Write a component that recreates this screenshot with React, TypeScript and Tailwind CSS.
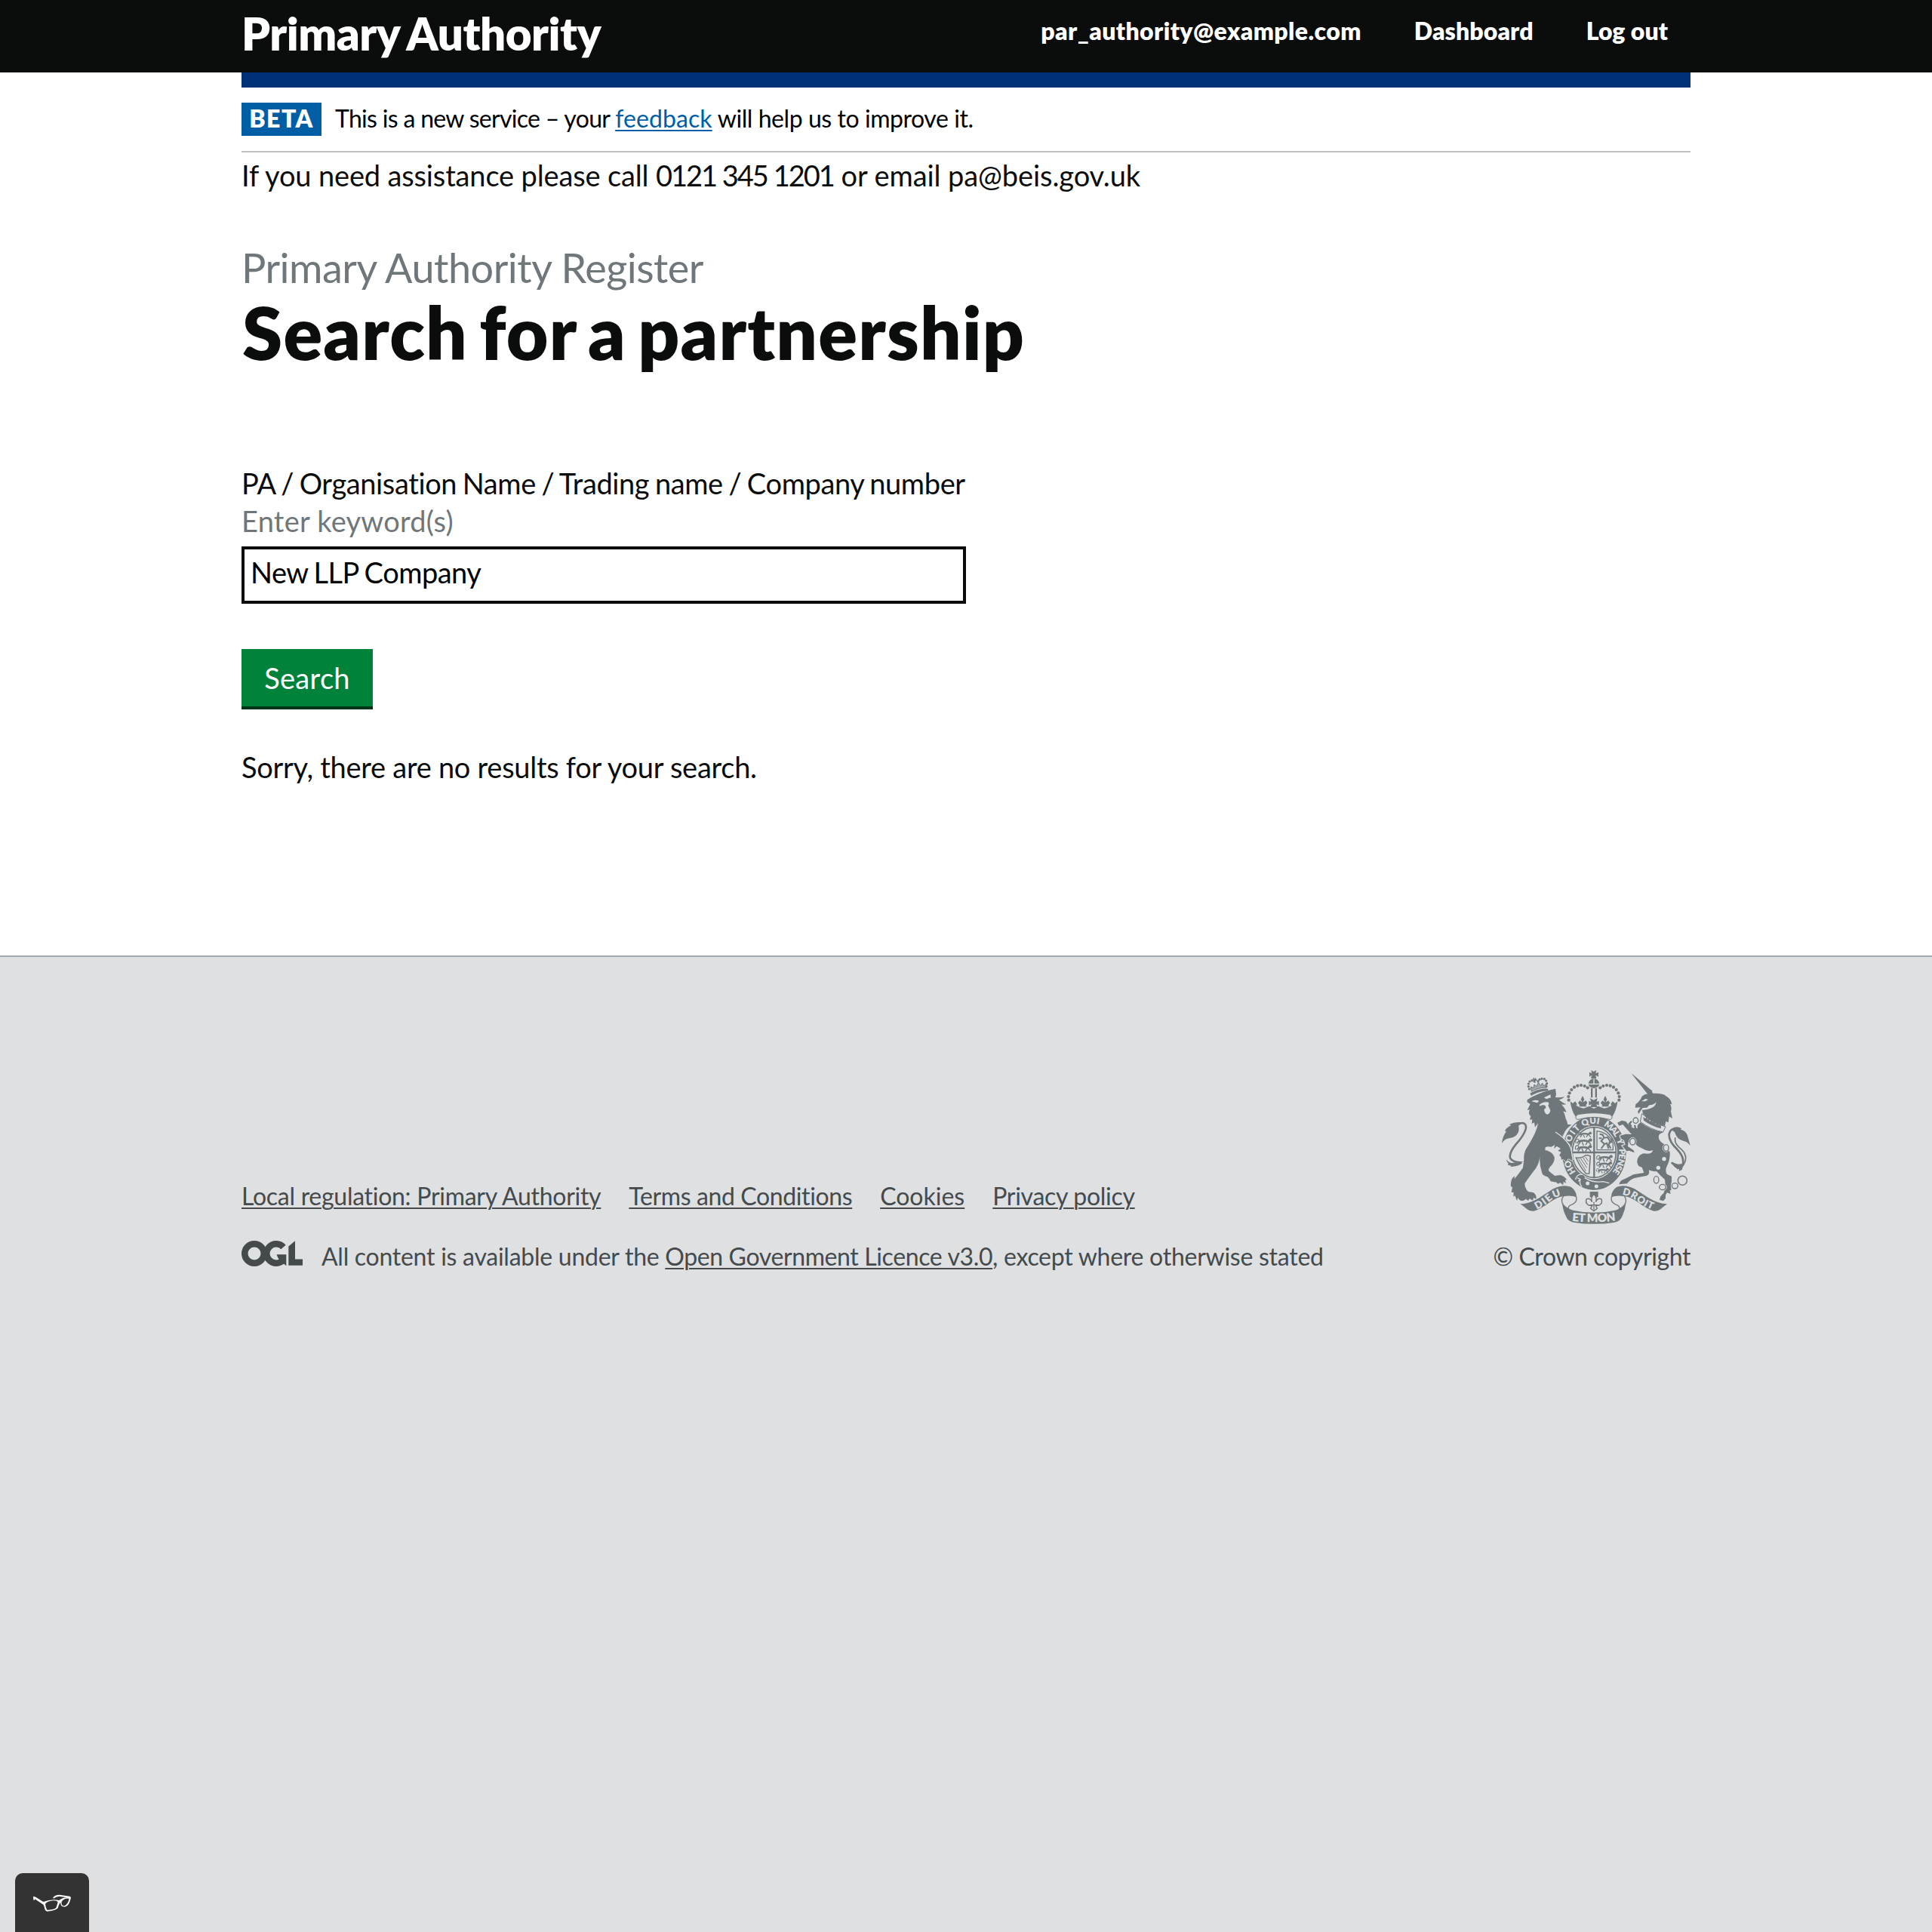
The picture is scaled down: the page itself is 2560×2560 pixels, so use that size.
import type { ReactNode } from "react";

const DARK = "#6f777b";
const PAPER = "#dee0e2";

/* Beads on the two arches of the central crown. */
const CROWN_BEADS: [number, number][] = [
  [356, 173], [355, 159], [359, 145], [367, 132], [378, 122], [391, 116], [405, 114], [419, 117], [431, 124],
  [556, 173], [557, 159], [553, 145], [545, 132], [534, 122], [521, 116], [507, 114], [493, 117], [481, 124],
];

/* Beads on the crown worn by the lion. */
const LION_CROWN_BEADS: [number, number][] = [
  [199, 129], [196, 119], [196, 108], [201, 99], [210, 95], [219, 98],
  [267, 118], [269, 107], [266, 96], [259, 89], [249, 88], [240, 91], [234, 98],
];

/* Links of the unicorn's chain: x, y, rx, ry. */
const CHAIN: [number, number, number, number][] = [
  [622, 254, 11, 12], [610, 338, 12, 14], [743, 363, 11, 14], [704, 490, 11, 15], [729, 519, 14, 12], [778, 514, 13, 12],
];

/* Words on the garter: text, offset along the ring, length. */
const GARTER_WORDS: [string, number, number][] = [
  ["HO", 84, 54], ["SOIT", 183, 93], ["QUI", 288, 66], ["MAL", 372, 68], ["Y", 450, 22], ["PENSE", 488, 98],
];

function LionGuardant({ x, y, s = 1 }: { x: number; y: number; s?: number }) {
  return (
    <g transform={`translate(${x} ${y}) scale(${s})`} fill="none" stroke={DARK} strokeWidth="4.5" strokeLinecap="round">
      <path d="M2 13q-4-9 4-11q7 1 3 7q-6 3-1 5" strokeWidth="2.5" />
      <path d="M11 9q12-5 26 0l6-6" strokeWidth="6" />
      <path d="M14 11l-5 7M20 12l3 7M34 11l-4 7M38 10l6 8" strokeWidth="3" />
      <circle cx="44" cy="5" r="4" fill={DARK} stroke="none" />
    </g>
  );
}

function RoyalArms() {
  return (
    <svg viewBox="90 54 750 612" className="h-[204px] w-[250px]" fill={DARK} aria-label="Royal coat of arms">
      {/* Lion supporter */}
      <path d="M190 180L192 171Q244 139 303 128L306 150L303 162Q320 164 340 160Q329 170 317 172Q330 183 346 190Q334 192 327 190Q342 206 347 222L334 217Q342 232 344 247Q350 258 352 270L368 271Q349 284 341 298L331 318Q345 330 354 348L340 372L309 356L297 366L301 351L286 359Q272 355 263 361L262 372Q290 377 298 397Q303 412 290 430Q274 445 276 454Q288 466 301 474L322 471Q341 476 348 490L342 491L345 504L335 497L334 511L321 501Q313 511 308 500L284 496Q281 486 271 478Q250 473 249 460Q239 430 241 397Q238 430 220 451Q196 482 181 505Q181 524 195 537L216 541Q230 552 226 566L216 561L213 572L201 565L194 573L186 566L175 573Q160 575 154 560L150 573L142 552L136 557L137 539L128 540L132 520L126 516Q124 493 134 481L141 475L140 487Q158 466 174 442L178 409Q176 386 187 366Q204 341 222 304Q232 282 234 264L222 281L219 262L209 267L211 250L201 251L205 237Q193 230 201 211L191 213Q198 200 203 189Z" />
      <path d="M208 178Q222 170 238 176L231 184ZM258 163L283 151L285 163L267 169Z" fill={PAPER} />
      <path d="M240 191Q254 178 273 181Q281 187 274 194L283 214Q281 228 271 230Q260 228 258 210L266 203L262 194Q253 190 240 197Z" fill={PAPER} />
      <path d="M202 146Q236 126 273 128L275 136Q235 138 207 156Z" />
      <path d="M208 139Q234 123 269 123L267 107L257 117L251 105L245 116L235 102L229 119L219 111L216 125L205 120Z" fill={DARK} fillOpacity="0.55" stroke={DARK} strokeWidth="3" />
      <path d="M216 82L221 90L223 84L228 90L230 95L222 97L224 104H218L219 96L213 93Z" />
      {LION_CROWN_BEADS.map(([x, y], i) => (
        <circle key={i} cx={x} cy={y} r="4.8" />
      ))}
      {/* Lion tail */}
      <path d="M115 427Q140 437 163 421Q133 419 124 405Q116 386 145 350Q178 314 185 288Q189 267 173 264Q158 264 148 275" fill="none" stroke={DARK} strokeWidth="8" />
      <path d="M172 262Q142 258 120 270L127 274Q104 284 102 298L109 296Q93 315 90 345Q101 326 122 324Q145 321 154 304Q161 288 156 276Z" />
      <path d="M107 408Q115 420 128 423L156 419L171 423Q160 437 124 438L130 431Q111 427 107 408Z" />

      {/* Garter */}
      <ellipse cx="457" cy="383" rx="132" ry="151" fill={PAPER} />
      <ellipse cx="457" cy="383" rx="127" ry="147" />
      <ellipse cx="457" cy="381" rx="92" ry="106" fill={PAPER} />
      <ellipse cx="457" cy="381" rx="87" ry="100" fill="none" stroke={DARK} strokeWidth="5" />
      <path d="M368 381H546M457 280V482" stroke={DARK} strokeWidth="7" />
      <path id="garter" d="M457 495A99 114 0 0 1 457 267A99 114 0 0 1 457 495" fill="none" />
      {GARTER_WORDS.map(([word, offset, length]) => (
        <text key={word} fill={PAPER} fontFamily="Lato" fontSize="35" fontWeight="800">
          <textPath href="#garter" startOffset={offset} textLength={length} lengthAdjust="spacing">
            {word}
          </textPath>
        </text>
      ))}
      {/* Quarters */}
      <LionGuardant x={392} y={299} s={1.15} />
      <LionGuardant x={382} y={325} s={1.4} />
      <LionGuardant x={381} y={351} s={1.4} />
      <path d="M468 371V296Q515 302 532 345V371Z" fill="none" stroke={DARK} strokeWidth="4" />
      <path d="M479 308l12 3l5 12l14-2l10 15l-5 14l8 15M494 325l-9 11l13 12l12-5M498 348l-13 18M507 343l7 23M476 325l11 0M521 344q12-13 2-17" fill="none" stroke={DARK} strokeWidth="6" />
      <path d="M385 402Q408 405 422 393Q431 391 442 396L437 465L425 466Q402 441 385 402Z" fill="none" stroke={DARK} strokeWidth="4.5" />
      <path d="M395 407L424 455M404 406L428 442M413 402L431 430M422 399L434 416" stroke={DARK} strokeWidth="3" />
      <LionGuardant x={466} y={391} s={1.35} />
      <LionGuardant x={466} y={417} s={1.3} />
      <LionGuardant x={465} y={443} s={1.05} />
      {/* Buckle and strap end */}
      <path d="M383 484Q393 464 412 471L424 482Q452 498 484 498L512 510Q470 538 425 524L391 508Z" />
      <path d="M419 482Q452 503 492 497L517 503" fill="none" stroke={PAPER} strokeWidth="4" />
      <path d="M383 489Q389 465 411 469M390 482L402 488L394 496M402 488Q396 503 408 517" fill="none" stroke={PAPER} strokeWidth="4" />
      <g fill={PAPER}>
        <circle cx="431" cy="504" r="7.5" />
        <circle cx="466" cy="516" r="7.5" />
      </g>
      {/* Lion foreleg over the garter */}
      <path d="M303 300Q338 322 356 350Q364 364 366 380L372 414L354 405L346 418L336 405L326 410Q328 397 318 393L326 380L313 374L324 366L309 356Z" />
      <path d="M303 300Q338 322 357 350Q366 364 368 382L373 412" fill="none" stroke={PAPER} strokeWidth="4" />
      <path d="M372 416L354 407L346 420L334 409" fill="none" stroke={PAPER} strokeWidth="3" />

      {/* Unicorn supporter */}
      <path d="M606 68L612 72L688 137L670 150Z" />
      <path d="M620 203L622 190Q640 176 647 158Q657 149 672 148L684 131L690 146Q735 145 742 157Q762 167 766 190L759 188Q767 204 762 218L768 246L755 238L752 262L742 258L738 276Q690 271 651 228L648 212Q661 213 676 208Q702 201 704 181Q694 193 676 193L667 203L650 204L641 217L634 228L630 219L641 202Z" />
      <path d="M645 178L661 168L672 171L660 178Z" fill={PAPER} />
      <path d="M641 262Q682 293 731 301L717 308Q707 324 723 340Q748 356 758 381Q760 410 745 438Q738 455 747 468L765 476L765 496Q760 514 764 530L758 532L761 546L747 541Q739 549 741 563L732 574L717 570Q719 553 733 544Q743 521 738 489Q720 473 705 456Q687 458 674 451Q680 468 664 474L621 482Q600 487 588 505L556 508Q560 492 578 487L613 469L655 462L647 440Q631 439 628 420Q626 395 653 385Q690 390 690 372Q670 380 650 366Q622 356 615 337L593 340L591 357L614 373L617 382L596 374L586 376L569 355L581 350L576 333Q559 326 561 314L583 308L606 309L590 292L571 270L556 275L549 263L567 254L583 258L590 267L612 284L630 285Q625 273 641 262Z" stroke={PAPER} strokeWidth="7" paintOrder="stroke" />
      <path d="M605 278L597 267L606 257M622 288L618 272" fill="none" stroke={DARK} strokeWidth="7" />
      <path d="M647 227Q690 266 741 279L731 300Q683 291 640 259Z" fill={PAPER} stroke={DARK} strokeWidth="3" />
      <path d="M654 254L652 240L660 246L665 240L669 250L676 248L678 258L685 253L690 262L698 259L701 269L709 263L713 272L722 270L723 286Q686 277 654 254Z" />
      <g fill={PAPER}>
        <circle cx="735" cy="407" r="8" />
        <circle cx="712" cy="442" r="8" />
      </g>
      {CHAIN.map(([x, y, rx, ry], i) => (
        <g key={i} fill="none">
          <ellipse cx={x} cy={y} rx={rx + 2} ry={ry + 2} stroke={PAPER} strokeWidth="3" />
          <ellipse cx={x} cy={y} rx={rx - 1} ry={ry - 1} fill={PAPER} stroke={DARK} strokeWidth="4" />
        </g>
      ))}
      <circle cx="808" cy="493" r="18" fill="none" stroke={DARK} strokeWidth="4.5" />
      {/* Unicorn tail */}
      <path d="M765 422Q784 437 808 433Q819 403 788 370Q752 336 755 308Q760 285 780 289" fill="none" stroke={DARK} strokeWidth="8" />
      <path d="M780 322Q774 342 795 361Q831 389 817 421Q808 444 786 446" fill="none" stroke={DARK} strokeWidth="5" />
      <path d="M762 290Q780 273 804 285L801 290Q825 296 829 318L839 353Q826 337 811 335Q785 329 777 300Z" />
      <path d="M762 419L790 428L813 425L806 450L793 456L796 447Q777 446 762 419Z" />

      {/* Central crown */}
      <path d="M445 54L455 60L466 54L463 67L474 62V80L463 74L466 87H444L448 74L438 80V62L448 67Z" />
      <path d="M434 107Q438 91 454 87V107ZM458 87Q474 91 478 107H458ZM434 111H478Q473 125 456 126Q439 125 434 111Z" />
      <path d="M444 126H451V163H444ZM461 126H468V163H461Z" />
      {CROWN_BEADS.map(([x, y], i) => (
        <circle key={i} cx={x} cy={y} r="6.3" />
      ))}
      <path d="M362 180L372 194L388 196L399 202L415 206L438 197L456 207L474 197L497 206L513 202L524 196L540 194L550 180Q545 214 530 238Q500 225 456 225Q412 225 382 238Q367 214 362 180Z" />
      <path d="M440 165L455 173L470 165L467 180L476 176V194L466 189L470 201H442L446 189L436 194V176L445 180Z" />
      <path d="M411 156L418 170L412 182L424 175L430 184L424 194L428 199H396L400 194L393 184L400 175L410 182L404 170ZM501 156L508 170L502 182L513 175L520 184L513 194L518 199H486L490 194L483 184L490 175L500 182L494 170Z" />
      <path d="M362 178L372 186L382 178L389 189L382 202H369ZM550 178L540 186L530 178L523 189L530 202H543Z" />
      <path d="M384 243Q383 231 400 229Q456 219 512 229Q529 231 528 243Q527 253 513 249Q456 233 399 249Q385 253 384 243Z" fill={PAPER} stroke={DARK} strokeWidth="3" />

      {/* Fleur-de-lis pendant */}
      <path d="M440 537H473V559H440Z" />
      <path d="M456 546Q471 563 463 578Q472 560 485 566Q494 583 475 592H463L469 604L456 614L443 604L449 592H437Q419 583 427 566Q440 560 449 578Q441 563 456 546Z" fill={PAPER} stroke={DARK} strokeWidth="4.5" />
      <path d="M440 590H472M456 578V608" stroke={DARK} strokeWidth="4" />

      {/* Motto ribbon */}
      <path d="M164 586Q200 585 240 561L294 526Q334 506 365 518Q386 532 387 557L384 562Q364 551 337 555Q313 557 281 579Q243 607 218 614Q197 615 186 603Z" />
      <path d="M747 586Q712 585 672 561L618 526Q578 506 547 518Q526 532 525 557L528 562Q548 551 575 555Q600 557 631 579Q668 607 694 614Q714 615 725 603Z" />
      <path d="M337 553Q324 566 331 584Q338 598 355 607Q352 592 372 587Q391 577 386 558Q372 549 337 553ZM575 553Q588 566 581 584Q574 598 557 607Q560 592 540 587Q521 577 526 558Q540 549 575 553Z" fill={PAPER} stroke={DARK} strokeWidth="4" />
      <path d="M330 581Q337 598 373 611Q456 630 541 611Q573 600 583 581Q581 607 569 634Q562 654 539 659Q456 672 375 659Q351 654 346 637Q332 610 330 581Z" />
      <path id="motto-left" d="M229 608Q262 592 288 569Q310 554 336 551" fill="none" />
      <path id="motto-mid" d="M369 654Q456 663 546 652" fill="none" />
      <path id="motto-right" d="M568 549Q597 553 621 570Q655 597 692 610" fill="none" />
      <g fill={PAPER} fontFamily="Lato" fontWeight="800">
        <text fontSize="40">
          <textPath href="#motto-left" textLength="112" lengthAdjust="spacing">DIEU</textPath>
        </text>
        <text fontSize="46">
          <textPath href="#motto-mid" textLength="174" lengthAdjust="spacing">ET MON</textPath>
        </text>
        <text fontSize="39">
          <textPath href="#motto-right" textLength="134" lengthAdjust="spacing">DROIT</textPath>
        </text>
      </g>
    </svg>
  );
}

function OglLogo() {
  return (
    <svg viewBox="0 0 81 34" className="h-[34px] w-[81px]" fill="none" stroke="#454a4c" aria-label="OGL">
      <circle cx="17" cy="17" r="12.75" strokeWidth="8.5" />
      <path d="M55.5 8.5A12.75 12.75 0 1 0 55.5 25.5" strokeWidth="8.5" />
      <path d="M46.5 18.3H59.3V33.3L53 28L49 24Z" fill="#454a4c" stroke="none" />
      <path d="M62.3 7.5L71 0.3V24.5H81V32.8H62.3Z" fill="#454a4c" stroke="none" />
    </svg>
  );
}

function Glasses() {
  return (
    <svg viewBox="132 148 150 69" className="h-[23px] w-[50px]" fill="#fff" aria-label="Glasses">
      <path d="M133 156L142 159L172 178Q205 166 235 172Q248 162 266 161L235 156Q221 157 214 165L210 162Q218 150 236 150L277 156Q284 158 281 165L278 176Q272 196 258 198Q245 198 242 190L240 180Q233 189 230 203Q222 213 188 216Q181 215 178 207Q176 196 173 190L141 168Q137 167 137 171L134 172Q131 164 133 156ZM180 186Q181 200 187 210Q210 211 223 202L230 180Q226 173 214 173Q190 174 180 186ZM245 178Q243 192 251 194Q263 196 272 176L275 166Q268 163 259 166Q248 170 245 178Z" fillRule="evenodd" />
    </svg>
  );
}

function FooterLink({ children, className = "" }: { children: ReactNode; className?: string }) {
  return (
    <a href="#" className={`underline decoration-2 underline-offset-[3px] ${className}`}>
      {children}
    </a>
  );
}

export default function App() {
  return (
    <div className="flex h-[2560px] w-[2560px] flex-col overflow-hidden bg-white font-[Lato,sans-serif] text-[#0b0c0c]">
      <header className="h-24 bg-[#0b0c0c] text-white">
        <div className="mx-auto flex h-full w-[1920px] justify-between">
          <a href="#" className="pt-[14px] text-[60px] leading-[60px] font-extrabold tracking-[-0.5px] [word-spacing:-2px]">
            Primary Authority
          </a>
          <nav className="flex gap-[70px] pt-[21px] pr-[30px] text-[32px] leading-10 font-extrabold">
            <a href="#" className="tracking-[0.4px]">par_authority@example.com</a>
            <a href="#" className="tracking-[0.1px]">Dashboard</a>
            <a href="#">Log out</a>
          </nav>
        </div>
      </header>

      <main className="mx-auto h-[1170px] w-[1920px] shrink-0">
        <div className="h-5 bg-[#003078]" />
        <div className="flex items-center border-b-2 border-[#bfc1c3] py-5 text-[32px] leading-[41px] text-black">
          <strong className="mr-[18px] w-[106px] bg-[#005ea5] pb-[3px] text-center font-extrabold tracking-[1.5px] text-white">BETA</strong>
          <p className="pb-[3px] tracking-[-0.69px]">
            This is a new service – your{" "}
            <a href="#" className="tracking-[0.1px] text-[#005ea5] underline decoration-2 underline-offset-[3px]">feedback</a>
            <span className="tracking-[-0.44px]"> will help us to improve it.</span>
          </p>
        </div>
        <p className="pt-[5px] text-[38px] leading-[50px] tracking-[-0.15px]">
          If you need assistance please call <span className="tracking-[-2px]">0121 345 1201</span>
          <span className="tracking-[-0.08px]"> or email pa@beis.gov.uk</span>
        </p>

        <h1 className="mt-[68px]">
          <span className="block text-[54px] leading-[60px] tracking-[-0.49px] text-[#6f777b]">Primary Authority Register</span>
          <span className="block pt-[5px] pl-px text-[96px] leading-[100px] font-extrabold tracking-[1.2px] [word-spacing:-8px]">
            Search for a partnership
          </span>
        </h1>

        <form className="mt-[125px]">
          <label className="block text-[38px] leading-[50px] tracking-[-0.38px] [word-spacing:-1.7px]">
            PA / Organisation Name / Trading name / Company number
          </label>
          <p className="text-[38px] leading-[50px] tracking-[0.25px] text-[#6f777b]">Enter keyword(s)</p>
          <div className="mt-[9px] h-[76px] w-[960px] border-4 border-[#0b0c0c] px-[8px] text-[38px] leading-[60px] tracking-[-0.5px] text-black [word-spacing:-1.5px]">
            New LLP Company
          </div>
          <button type="button" className="mt-[60px] block h-20 w-[174px] border-b-4 border-[#003618] bg-[#00823b] text-[38px] leading-[76px] tracking-[0.3px] text-white">
            Search
          </button>
        </form>
        <p className="mt-[51px] text-[38px] leading-[50px] tracking-[-0.28px]">Sorry, there are no results for your search.</p>
      </main>

      <footer className="relative flex-1 border-t-2 border-[#a1acb2] bg-[#dee0e2] text-[32px] leading-10 text-[#454a4c]">
        <div className="mx-auto flex w-[1920px] items-end justify-between pt-[150px]">
          <div>
            <nav className="mb-10 flex gap-[37px]">
              <FooterLink className="tracking-[-0.28px]">Local regulation: Primary Authority</FooterLink>
              <FooterLink className="tracking-[-0.38px]">Terms and Conditions</FooterLink>
              <FooterLink>Cookies</FooterLink>
              <FooterLink className="tracking-[-0.3px]">Privacy policy</FooterLink>
            </nav>
            <div className="flex">
              <div className="-mt-px">
                <OglLogo />
              </div>
              <p className="ml-[25px] tracking-[-0.26px]">
                All content is available under the{" "}
                <FooterLink className="tracking-[-0.38px]">Open Government Licence v3.0</FooterLink>, except where otherwise stated
              </p>
            </div>
          </div>
          <div className="flex flex-col items-end gap-[23px]">
            <RoyalArms />
            <p className="tracking-[-0.4px]">© Crown copyright</p>
          </div>
        </div>
        <button type="button" aria-label="Accessibility tools" className="absolute bottom-0 left-5 flex h-[78px] w-[98px] justify-center rounded-t-[10px] bg-[#333] pt-7">
          <Glasses />
        </button>
      </footer>
    </div>
  );
}
